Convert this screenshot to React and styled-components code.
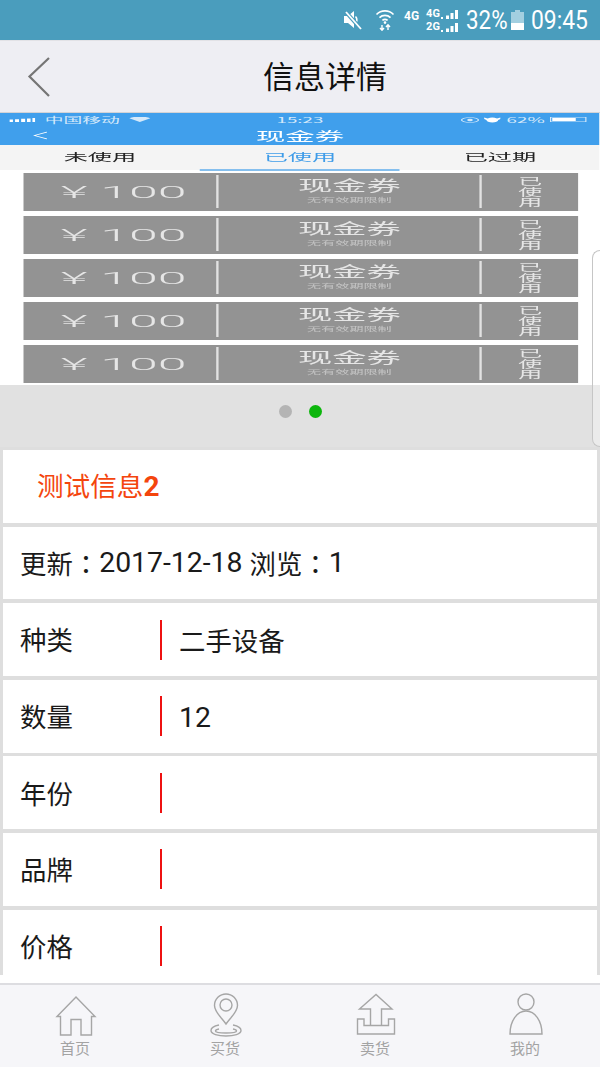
import styled, { createGlobalStyle } from "styled-components";

const GlobalStyle = createGlobalStyle`
  html, body {
    margin: 0;
    padding: 0;
    background: #fff;
    font-family: Roboto, "Noto Sans CJK SC", sans-serif;
  }
`;

const Page = styled.div`
  position: relative;
  display: flex;
  flex-direction: column;
  width: 600px;
  height: 1067px;
  overflow: hidden;
  background: #fff;
`;

const StatusBar = styled.div`
  display: flex;
  flex: none;
  align-items: center;
  height: 40px;
  padding-left: 343px;
  box-sizing: border-box;
  background: #4a9dbd;
  color: #fff;
`;

const TinyNet = styled.span`
  font: 700 ${(p) => p.$size || 11}px/10px Roboto, sans-serif;
  margin: ${(p) => p.$margin || 0};
`;

const NetStack = styled.div`
  display: flex;
  flex-direction: column;
  gap: 3px;
  margin-left: 7px;
`;

const NetLine = styled.div`
  display: flex;
  align-items: flex-end;
  gap: 1px;
`;

/* the phone's clock font is narrow, so Roboto gets squeezed */
const Narrow = styled.span`
  display: block;
  flex: none;
  width: ${(p) => p.$width}px;
  margin-left: ${(p) => p.$gap}px;
  font: 400 26px/40px Roboto, sans-serif;
  white-space: nowrap;
  transform: scaleX(${(p) => p.$squeeze});
  transform-origin: 0 50%;
`;

const NavBar = styled.header`
  display: grid;
  flex: none;
  grid-template-columns: 236px auto;
  align-items: center;
  height: 73px;
  padding-left: 27px;
  box-sizing: border-box;
  background: #eeeef3;
  border-top: 1px solid #e2e2e6;
  border-bottom: 1px solid #d3d3d6;
`;

const NavTitle = styled.h1`
  margin: 0 0 5px;
  font: 400 31px/1 "Noto Sans CJK SC", sans-serif;
  color: #111;
`;

const Shot = styled.div`
  flex: none;
  height: 272px;
  overflow: hidden;
  background: #fff;
`;

/* the carousel picture is a phone screen stretched sideways */
const ShotInner = styled.div`
  width: 255.32px;
  height: 272px;
  transform: scaleX(2.35);
  transform-origin: 0 0;
  filter: blur(0.3px);
  font-family: "Noto Sans CJK SC", sans-serif;
`;

const ShotStatus = styled.div`
  display: grid;
  grid-template-columns: 1fr auto 1fr;
  align-items: center;
  height: 13px;
  padding: 0 4px;
  background: #409fec;
  color: #d5e9fa;
  font-size: 8px;
  line-height: 11px;
`;

const ShotStatusSide = styled.div`
  display: flex;
  align-items: center;
  justify-content: ${(p) => (p.$end ? "flex-end" : "flex-start")};
  gap: ${(p) => (p.$end ? "2.5px" : "4px")};
`;

const ShotHeader = styled.div`
  display: grid;
  grid-template-columns: 1fr auto 1fr;
  align-items: center;
  height: 19px;
  background: #409fec;
  color: #fff;
  font-size: 12.5px;
  line-height: 17px;
`;

const ShotBack = styled.svg`
  margin-left: 13.5px;
`;

const ShotTabs = styled.div`
  display: grid;
  grid-template-columns: repeat(3, 1fr);
  height: 25px;
  background: #f4f4f4;
`;

const ShotTab = styled.div`
  box-sizing: border-box;
  height: 26px;
  text-align: center;
  font-size: 10.3px;
  line-height: 24px;
  color: ${(p) => (p.$active ? "#3f9ce8" : "#222")};
  border-bottom: 2px solid ${(p) => (p.$active ? "#85bfee" : "transparent")};
`;

const CouponList = styled.div`
  display: flex;
  flex-direction: column;
  gap: 5px;
  padding: 3px 9.4px 0 9.6px;
`;

const Coupon = styled.div`
  display: grid;
  grid-template-columns: 82.4px 1px 111.4px 1px 1fr;
  align-items: center;
  height: 38px;
  background: #939393;
  color: #e6e6e6;
`;

const Amount = styled.div`
  padding-left: 3.4px;
  text-align: center;
  font: 300 17px/38px Roboto, sans-serif;
  white-space: nowrap;
`;

const AmountText = styled.span`
  display: inline-block;
  transform: scaleX(1.3);
`;

const CouponRule = styled.div`
  height: 33px;
  margin-bottom: 1px;
  background: #e2e2e2;
`;

const CouponMid = styled.div`
  display: flex;
  flex-direction: column;
  align-items: center;
  height: 38px;
`;

const CouponName = styled.div`
  margin-top: 2px;
  font-size: 14.6px;
  line-height: 20px;
`;

const CouponNote = styled.div`
  margin-top: 1px;
  font-size: 6px;
  line-height: 7px;
  color: #c4c4c4;
`;

const CouponState = styled.div`
  display: flex;
  flex-direction: column;
  align-items: center;
  font-size: 10.2px;
  line-height: 10.4px;
`;

const StateChar = styled.span`
  display: block;
  height: 10.4px;
`;

const Pager = styled.div`
  display: flex;
  flex: none;
  align-items: center;
  justify-content: center;
  gap: 17px;
  height: 62px;
  padding-bottom: 10px;
  box-sizing: border-box;
  background: #e1e1e1;
`;

const Dot = styled.span`
  width: 13px;
  height: 13px;
  border-radius: 50%;
  background: ${(p) => (p.$on ? "#0cb60c" : "#b4b4b4")};
`;

const Details = styled.div`
  display: flex;
  flex: none;
  flex-direction: column;
  gap: 3.8px;
  height: 528px;
  padding: 3px 3px 0;
  box-sizing: border-box;
  overflow: hidden;
  background: #dedede;
`;

const Row = styled.div`
  display: flex;
  flex: none;
  align-items: center;
  height: 72.8px;
  padding-left: ${(p) => p.$indent || 17}px;
  box-sizing: border-box;
  background: #fff;
  font: 400 26.4px/1 "Noto Sans CJK SC", sans-serif;
  color: #1a1a1a;
  white-space: pre;
`;

const InfoTitle = styled.span`
  color: #f4450d;
  font-size: 26.6px;
`;

const InfoNumber = styled.b`
  font: 700 28px/1 Roboto, sans-serif;
`;

const Digits = styled.span`
  font: 400 28.4px/1 Roboto, sans-serif;
`;

/* traditional-chinese cut, its full-width colon sits in the middle of the cell */
const Colon = styled.span`
  font-family: "Noto Sans CJK TC", sans-serif;
`;

const RowLabel = styled.span`
  flex: none;
  width: 140px;
`;

const RowValue = styled.span`
  flex: 1;
  min-height: 40px;
  padding-left: 17px;
  border-left: 2px solid #ee1111;
  line-height: 40px;
`;

const TabGap = styled.div`
  flex: 1;
  background: #fff;
`;

const TabBar = styled.nav`
  display: grid;
  flex: none;
  grid-template-columns: repeat(4, 150px);
  height: 84px;
  box-sizing: border-box;
  background: #f6f6f9;
  border-top: 2px solid #dddde1;
`;

const TabItem = styled.div`
  display: flex;
  flex-direction: column;
  align-items: center;
  padding-top: 8px;
`;

const TabIcon = styled.svg`
  margin-left: 2px;
  fill: none;
  stroke: #a6a6a6;
  stroke-width: 1.4;
`;

const TabLabel = styled.span`
  margin-top: 1px;
  font: 400 15px/20px "Noto Sans CJK SC", sans-serif;
  color: #a3a3a3;
`;

const Handle = styled.div`
  position: absolute;
  top: 250px;
  right: 0;
  width: 8px;
  height: 197px;
  box-sizing: border-box;
  background: rgba(255, 255, 255, 0.35);
  border: 1px solid #c6c6c6;
  border-right: 0;
  border-radius: 8px 0 0 8px;
`;

const StatusIcon = styled.svg`
  flex: none;
  margin-left: ${(p) => p.$gap || 0}px;
`;

const MuteIcon = () => (
  <StatusIcon width="20" height="22" viewBox="0 0 20 22">
    <path d="M1 7h4l6-5v17l-6-5H1z" fill="#fff" />
    <path d="M12.500 7.500c1.500 1.500 1.500 4 1 5.500" stroke="#fff" strokeWidth="1.500" fill="none" />
    <path d="M2 2l16 18" stroke="#4a9dbd" strokeWidth="4" />
    <path d="M3 3l15 17" stroke="#fff" strokeWidth="1.800" />
  </StatusIcon>
);

const WifiIcon = () => (
  <StatusIcon $gap={12} width="20" height="22" viewBox="0 0 20 22">
    <g fill="none" stroke="#fff" strokeWidth="1.700">
      <path d="M1.500 5.500a12 12 0 0 1 17 0" />
      <path d="M4.500 8.600a8 8 0 0 1 11 0" />
      <path d="M7.400 11.400a4 4 0 0 1 5.200 0" />
    </g>
    <circle cx="10" cy="13.600" r="1.300" fill="#fff" />
    <path d="M7 16v5M5 19l2 2.200L9 19M13 21v-5M11 18l2-2.200L15 18" stroke="#fff" strokeWidth="1.400" fill="none" />
  </StatusIcon>
);

const SignalBars = () => (
  <svg width="17" height="9" viewBox="0 0 17 9">
    <path d="M0 7h2v2H0zM5 5.500h3V9H5zM9.500 3h3v6h-3zM14 0h3v9h-3z" fill="#fff" />
  </svg>
);

const BatteryIcon = () => (
  <StatusIcon $gap={6} width="13" height="20" viewBox="0 0 13 20">
    <path d="M4 0h5v2h4v18H0V2h4z" fill="#a3cfe0" />
    <path d="M0 13h13v7H0z" fill="#fff" />
  </StatusIcon>
);

const BackIcon = () => (
  <svg width="24" height="42" viewBox="0 0 24 42">
    <path d="M22 2L2.500 20.500L22 40" fill="none" stroke="#757575" strokeWidth="2.200" />
  </svg>
);

const HomeIcon = () => (
  <TabIcon width="44" height="44" viewBox="0 0 44 44">
    <path d="M3 23.500L22 4L41 23.500H37.500V42H27V26.500H17V42H6.500V23.500Z" />
  </TabIcon>
);

const PinIcon = () => (
  <TabIcon width="44" height="44" viewBox="0 0 44 44">
    <path d="M22 31C17 24 10.500 19 10.500 12.500A11.500 11.500 0 0 1 33.500 12.500C33.500 19 27 24 22 31Z" />
    <circle cx="22" cy="12" r="6" />
    <path d="M15 32C10 33 7 35 7 37.500C7 41 14 43 22 43C30 43 37 41 37 37.500C37 35 34 33 29 32" />
    <path d="M15 36C12.500 36.500 11.500 37 11.500 38C11.500 39.500 16 40 22 40C28 40 32.500 39.500 32.500 38C32.500 37 31.500 36.500 29 36" />
  </TabIcon>
);

const UploadIcon = () => (
  <TabIcon width="44" height="44" viewBox="0 0 44 44">
    <path d="M16.500 32.500V16H5.500L22 1.500L38 16H27.500V32.500" />
    <path d="M3.500 26H10V32.500H34.500V26H40.500V41H3.500Z" />
  </TabIcon>
);

const PersonIcon = () => (
  <TabIcon width="44" height="44" viewBox="0 0 44 44">
    <circle cx="22" cy="9" r="8" />
    <path d="M6 41C6 28 13 18 22 18C31 18 38 28 38 41Z" />
  </TabIcon>
);

const tabs = [
  { label: "首页", Icon: HomeIcon },
  { label: "买货", Icon: PinIcon },
  { label: "卖货", Icon: UploadIcon },
  { label: "我的", Icon: PersonIcon },
];

const fields = [
  { label: "种类", value: "二手设备" },
  { label: "数量", value: <Digits>12</Digits> },
  { label: "年份", value: "" },
  { label: "品牌", value: "" },
  { label: "价格", value: "" },
];

function InnerShot() {
  return (
    <ShotInner>
      <ShotStatus>
        <ShotStatusSide>
          <svg width="11" height="4" viewBox="0 0 11 4">
            <path d="M0 1.500h1.500V4H0zM2.400 1.200h1.700V4H2.400zM5 .8h1.700V4H5zM7.500 .4h1.500V4H7.500zM9.800 0H11v4H9.800z" fill="#fff" />
          </svg>
          <span>中国移动</span>
          <svg width="9" height="5" viewBox="0 0 9 5">
            <path d="M0 1.200a7 7 0 0 1 9 0L4.500 5z" fill="#d5e9fa" />
          </svg>
        </ShotStatusSide>
        <span>15:23</span>
        <ShotStatusSide $end>
          <svg width="8" height="6" viewBox="0 0 8 6">
            <ellipse cx="4" cy="3" rx="3.600" ry="2.500" fill="none" stroke="#d5e9fa" strokeWidth=".6" />
            <circle cx="4" cy="3" r="1.200" fill="#d5e9fa" />
          </svg>
          <svg width="7" height="6" viewBox="0 0 7 6">
            <path d="M0 .5l1.500 1A3 3 0 0 1 5.500 1.500L7 .5v1.500L6 3A2.500 2.500 0 0 1 1 3L0 2z" fill="#fff" />
          </svg>
          <span>62%</span>
          <svg width="17" height="5" viewBox="0 0 17 5">
            <path d="M.3.3h15v4.400H.3z" fill="none" stroke="#d5e9fa" strokeWidth=".5" />
            <path d="M1 1h10v3H1z" fill="#fff" />
          </svg>
        </ShotStatusSide>
      </ShotStatus>
      <ShotHeader>
        <ShotBack width="6" height="11" viewBox="0 0 6 11">
          <path d="M6 2L.6 5.500L6 9" fill="none" stroke="#fff" strokeWidth=".8" />
        </ShotBack>
        <span>现金券</span>
      </ShotHeader>
      <ShotTabs>
        <ShotTab>未使用</ShotTab>
        <ShotTab $active>已使用</ShotTab>
        <ShotTab>已过期</ShotTab>
      </ShotTabs>
      <CouponList>
        {[0, 1, 2, 3, 4].map((n) => (
          <Coupon key={n}>
            <Amount>
              <AmountText>¥ 100</AmountText>
            </Amount>
            <CouponRule />
            <CouponMid>
              <CouponName>现金券</CouponName>
              <CouponNote>无有效期限制</CouponNote>
            </CouponMid>
            <CouponRule />
            <CouponState>
              <StateChar>已</StateChar>
              <StateChar>使</StateChar>
              <StateChar>用</StateChar>
            </CouponState>
          </Coupon>
        ))}
      </CouponList>
    </ShotInner>
  );
}

export default function App() {
  return (
    <Page>
      <GlobalStyle />
      <StatusBar>
        <MuteIcon />
        <WifiIcon />
        <TinyNet $size={12} $margin="0 0 8px 9px">4G</TinyNet>
        <NetStack>
          <NetLine>
            <TinyNet>4G</TinyNet>
            <SignalBars />
          </NetLine>
          <NetLine>
            <TinyNet>2G</TinyNet>
            <SignalBars />
          </NetLine>
        </NetStack>
        <Narrow $width={39} $gap={8} $squeeze={0.86}>32%</Narrow>
        <BatteryIcon />
        <Narrow $width={54} $gap={7} $squeeze={0.88}>09:45</Narrow>
      </StatusBar>

      <NavBar>
        <BackIcon />
        <NavTitle>信息详情</NavTitle>
      </NavBar>

      <Shot>
        <InnerShot />
      </Shot>

      <Pager>
        <Dot />
        <Dot $on />
      </Pager>

      <Details>
        <Row $indent={34}>
          <InfoTitle>
            测试信息<InfoNumber>2</InfoNumber>
          </InfoTitle>
        </Row>
        <Row>
          更新<Colon>：</Colon><Digits>2017-12-18 </Digits>浏览<Colon>：</Colon><Digits>1</Digits>
        </Row>
        {fields.map((f) => (
          <Row key={f.label}>
            <RowLabel>{f.label}</RowLabel>
            <RowValue>{f.value}</RowValue>
          </Row>
        ))}
      </Details>

      <TabGap />

      <TabBar>
        {tabs.map(({ label, Icon }) => (
          <TabItem key={label}>
            <Icon />
            <TabLabel>{label}</TabLabel>
          </TabItem>
        ))}
      </TabBar>

      <Handle />
    </Page>
  );
}
